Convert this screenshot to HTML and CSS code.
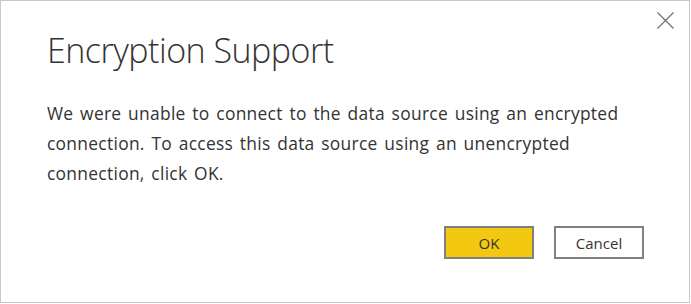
FILE: index.html
```html
<!DOCTYPE html>
<html>
<head>
<meta charset="utf-8">
<link rel="stylesheet" href="styles.css">
</head>
<body>
<div class="dialog">
  <button class="close" aria-label="Close">
    <svg width="17" height="17" viewBox="0 0 17 17"><path d="M0.5 0.5 L16.5 16.5 M16.5 0.5 L0.5 16.5" stroke="#6e6e6e" stroke-width="1.1" fill="none"/></svg>
  </button>
  <h1 class="title">Encryption Support</h1>
  <p class="message">We were unable to connect to the data source using an encrypted connection. To access this data source using an unencrypted connection, click OK.</p>
  <div class="actions">
    <button class="btn btn-primary">OK</button>
    <button class="btn">Cancel</button>
  </div>
</div>
</body>
</html>
```
FILE: styles.css
```css
html, body {
  margin: 0;
  padding: 0;
  background: #ffffff;
}
.dialog {
  position: relative;
  box-sizing: border-box;
  width: 690px;
  height: 303px;
  border: 1px solid #c8c8c8;
  background: #ffffff;
  display: flex;
  flex-direction: column;
  padding: 0 45px 0 46px;
  font-family: "Segoe UI", "Open Sans", sans-serif;
  color: #333333;
}
.close {
  position: absolute;
  top: 11px;
  right: 15px;
  width: 17px;
  height: 17px;
  padding: 0;
  border: 0;
  background: transparent;
  display: flex;
}
.title {
  margin: 27px 0 0 0;
  font-size: 34px;
  line-height: 44px;
  font-weight: 300;
  letter-spacing: -0.5px;
  color: #333333;
}
.message {
  margin: 26px 0 0 0;
  font-size: 17.4px;
  line-height: 30px;
  letter-spacing: 0.29px;
  word-spacing: 1.9px;
  color: #333333;
}
.actions {
  display: flex;
  justify-content: flex-end;
  gap: 20px;
  margin-top: 38px;
}
.btn {
  box-sizing: border-box;
  width: 90px;
  height: 33px;
  border: 2px solid #808080;
  background: #ffffff;
  font-family: "Segoe UI", "Open Sans", sans-serif;
  font-size: 15px;
  color: #333333;
  padding: 0;
}
.btn-primary {
  background: #f2c811;
}
```
